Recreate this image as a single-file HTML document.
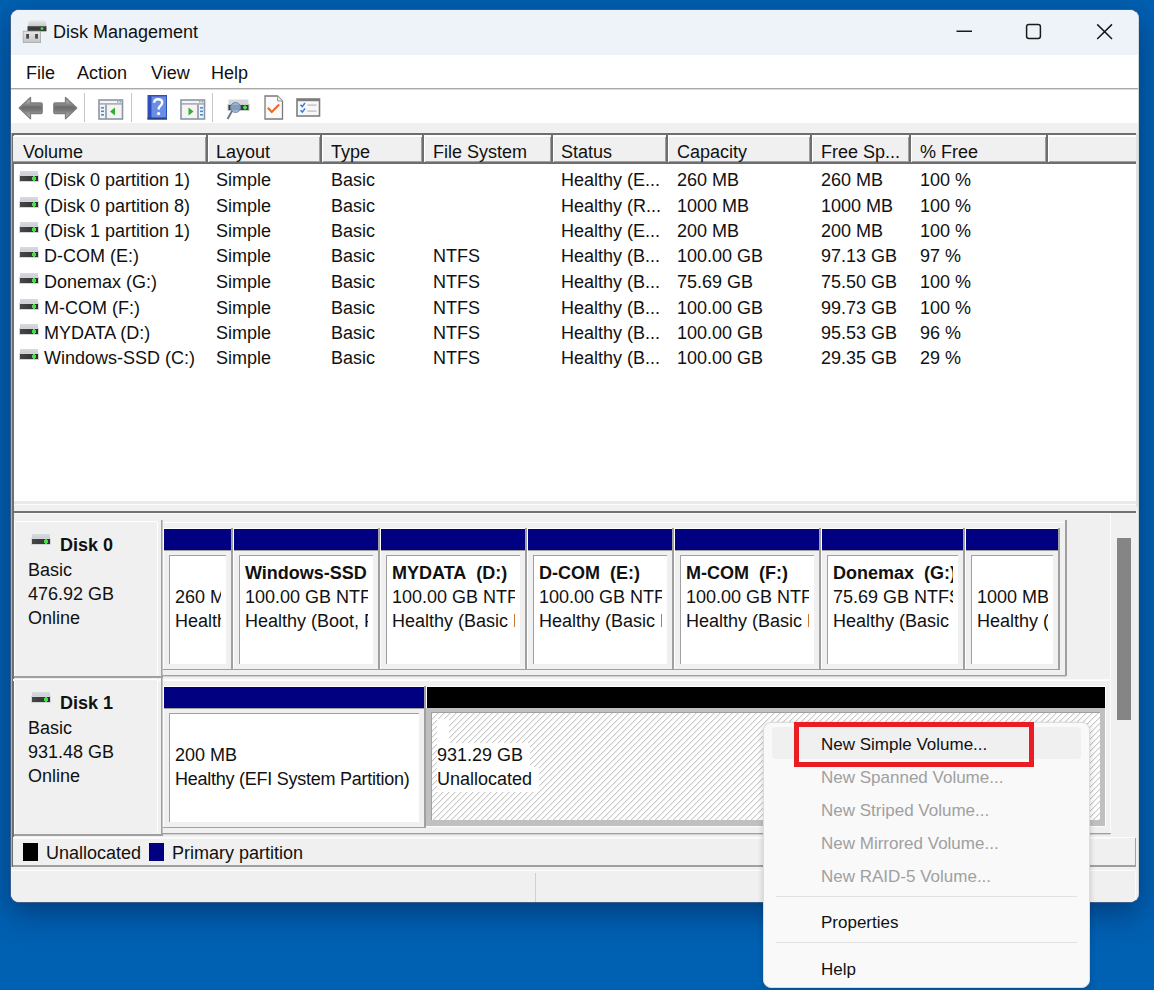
<!DOCTYPE html><html><head><meta charset="utf-8"><style>
*{margin:0;padding:0;box-sizing:border-box}
html,body{width:1154px;height:990px;overflow:hidden}
body{background:#0060b1;font-family:"Liberation Sans",sans-serif;font-size:18px;color:#111;position:relative}
.a{position:absolute}
.t{position:absolute;line-height:20px;white-space:nowrap}
.b{font-weight:bold}
#win{position:absolute;left:10px;top:9px;width:1129px;height:894px;border-radius:9px;border:1px solid #3b5f88;border-right-color:#cfd6de;background:#f0f0f0;box-shadow:0 10px 30px rgba(0,20,60,0.45)}
#lay{position:absolute;left:0;top:0;width:1154px;height:990px;clip-path:inset(10px 16px 88px 11px round 8px)}
.clip{position:absolute;overflow:hidden}
.gr{color:#a3a3a3}
</style></head><body><div id="win"></div><div id="lay">
<div class="a" style="left:11px;top:10px;width:1127px;height:45px;background:#eef3fa"></div>
<div class="a" style="left:11px;top:55px;width:1127px;height:33px;background:#fff"></div>
<div class="a" style="left:11px;top:88px;width:1127px;height:1px;background:#a9a9a9"></div>
<div class="a" style="left:11px;top:89px;width:1127px;height:34px;background:#fff"></div>
<div class="a" style="left:11px;top:89px;width:1127px;height:1px;background:#dcdcdc"></div>
<div class="a" style="left:11px;top:123px;width:1127px;height:10px;background:#f0f0f0"></div>
<div class="a" style="left:11px;top:133px;width:1126px;height:2px;background:#6e6e6e"></div>
<div class="a" style="left:11px;top:133px;width:1px;height:734px;background:#b0b0b0"></div>
<div class="a" style="left:12px;top:133px;width:2px;height:734px;background:#707070"></div>
<div class="a" style="left:14px;top:135px;width:1122px;height:366px;background:#fff"></div>
<div class="a" style="left:1136px;top:133px;width:2px;height:374px;background:#e3e3e3"></div>
<div class="a" style="left:13px;top:136px;width:1123px;height:26px;background:#f0f0f0"></div>
<div class="a" style="left:13px;top:136px;width:1123px;height:1px;background:#fff"></div>
<div class="a" style="left:13px;top:162px;width:1123px;height:2px;background:#6e6e6e"></div>
<div class="a" style="left:13px;top:161px;width:1123px;height:1px;background:#a0a0a0"></div>
<div class="a" style="left:205px;top:137px;width:1px;height:25px;background:#a0a0a0"></div>
<div class="a" style="left:206px;top:135px;width:2px;height:27px;background:#6e6e6e"></div>
<div class="a" style="left:208px;top:137px;width:1px;height:25px;background:#fff"></div>
<div class="a" style="left:319px;top:137px;width:1px;height:25px;background:#a0a0a0"></div>
<div class="a" style="left:320px;top:135px;width:2px;height:27px;background:#6e6e6e"></div>
<div class="a" style="left:322px;top:137px;width:1px;height:25px;background:#fff"></div>
<div class="a" style="left:421px;top:137px;width:1px;height:25px;background:#a0a0a0"></div>
<div class="a" style="left:422px;top:135px;width:2px;height:27px;background:#6e6e6e"></div>
<div class="a" style="left:424px;top:137px;width:1px;height:25px;background:#fff"></div>
<div class="a" style="left:550px;top:137px;width:1px;height:25px;background:#a0a0a0"></div>
<div class="a" style="left:551px;top:135px;width:2px;height:27px;background:#6e6e6e"></div>
<div class="a" style="left:553px;top:137px;width:1px;height:25px;background:#fff"></div>
<div class="a" style="left:665px;top:137px;width:1px;height:25px;background:#a0a0a0"></div>
<div class="a" style="left:666px;top:135px;width:2px;height:27px;background:#6e6e6e"></div>
<div class="a" style="left:668px;top:137px;width:1px;height:25px;background:#fff"></div>
<div class="a" style="left:809px;top:137px;width:1px;height:25px;background:#a0a0a0"></div>
<div class="a" style="left:810px;top:135px;width:2px;height:27px;background:#6e6e6e"></div>
<div class="a" style="left:812px;top:137px;width:1px;height:25px;background:#fff"></div>
<div class="a" style="left:908px;top:137px;width:1px;height:25px;background:#a0a0a0"></div>
<div class="a" style="left:909px;top:135px;width:2px;height:27px;background:#6e6e6e"></div>
<div class="a" style="left:911px;top:137px;width:1px;height:25px;background:#fff"></div>
<div class="a" style="left:1045px;top:137px;width:1px;height:25px;background:#a0a0a0"></div>
<div class="a" style="left:1046px;top:135px;width:2px;height:27px;background:#6e6e6e"></div>
<div class="a" style="left:1048px;top:137px;width:1px;height:25px;background:#fff"></div>
<div class="t" style="left:23px;top:142px;">Volume</div>
<div class="t" style="left:216px;top:142px;">Layout</div>
<div class="t" style="left:331px;top:142px;">Type</div>
<div class="t" style="left:433px;top:142px;">File System</div>
<div class="t" style="left:561px;top:142px;">Status</div>
<div class="t" style="left:677px;top:142px;">Capacity</div>
<div class="t" style="left:821px;top:142px;">Free Sp...</div>
<div class="t" style="left:920px;top:142px;">% Free</div>
<div class="a" style="left:19px;top:171px;width:20px;height:12px"><div class="a" style="left:1px;top:0;width:18px;height:5px;background:linear-gradient(#d8dbe0,#c9ccd1)"></div><div class="a" style="left:0;top:4px;width:20px;height:7px;background:#d2d5da"></div><div class="a" style="left:1px;top:5px;width:18px;height:5px;background:linear-gradient(90deg,#474747,#2e2e2e)"></div><div class="a" style="left:13px;top:6px;width:4px;height:3px;background:#45e045"></div><div class="a" style="left:14px;top:5px;width:2px;height:5px;background:#45e045"></div></div>
<div class="t" style="left:44px;top:170px;">(Disk 0 partition 1)</div>
<div class="t" style="left:216px;top:170px;">Simple</div>
<div class="t" style="left:331px;top:170px;">Basic</div>
<div class="t" style="left:561px;top:170px;">Healthy (E...</div>
<div class="t" style="left:677px;top:170px;">260 MB</div>
<div class="t" style="left:821px;top:170px;">260 MB</div>
<div class="t" style="left:920px;top:170px;">100 %</div>
<div class="a" style="left:19px;top:197px;width:20px;height:12px"><div class="a" style="left:1px;top:0;width:18px;height:5px;background:linear-gradient(#d8dbe0,#c9ccd1)"></div><div class="a" style="left:0;top:4px;width:20px;height:7px;background:#d2d5da"></div><div class="a" style="left:1px;top:5px;width:18px;height:5px;background:linear-gradient(90deg,#474747,#2e2e2e)"></div><div class="a" style="left:13px;top:6px;width:4px;height:3px;background:#45e045"></div><div class="a" style="left:14px;top:5px;width:2px;height:5px;background:#45e045"></div></div>
<div class="t" style="left:44px;top:196px;">(Disk 0 partition 8)</div>
<div class="t" style="left:216px;top:196px;">Simple</div>
<div class="t" style="left:331px;top:196px;">Basic</div>
<div class="t" style="left:561px;top:196px;">Healthy (R...</div>
<div class="t" style="left:677px;top:196px;">1000 MB</div>
<div class="t" style="left:821px;top:196px;">1000 MB</div>
<div class="t" style="left:920px;top:196px;">100 %</div>
<div class="a" style="left:19px;top:222px;width:20px;height:12px"><div class="a" style="left:1px;top:0;width:18px;height:5px;background:linear-gradient(#d8dbe0,#c9ccd1)"></div><div class="a" style="left:0;top:4px;width:20px;height:7px;background:#d2d5da"></div><div class="a" style="left:1px;top:5px;width:18px;height:5px;background:linear-gradient(90deg,#474747,#2e2e2e)"></div><div class="a" style="left:13px;top:6px;width:4px;height:3px;background:#45e045"></div><div class="a" style="left:14px;top:5px;width:2px;height:5px;background:#45e045"></div></div>
<div class="t" style="left:44px;top:221px;">(Disk 1 partition 1)</div>
<div class="t" style="left:216px;top:221px;">Simple</div>
<div class="t" style="left:331px;top:221px;">Basic</div>
<div class="t" style="left:561px;top:221px;">Healthy (E...</div>
<div class="t" style="left:677px;top:221px;">200 MB</div>
<div class="t" style="left:821px;top:221px;">200 MB</div>
<div class="t" style="left:920px;top:221px;">100 %</div>
<div class="a" style="left:19px;top:247px;width:20px;height:12px"><div class="a" style="left:1px;top:0;width:18px;height:5px;background:linear-gradient(#d8dbe0,#c9ccd1)"></div><div class="a" style="left:0;top:4px;width:20px;height:7px;background:#d2d5da"></div><div class="a" style="left:1px;top:5px;width:18px;height:5px;background:linear-gradient(90deg,#474747,#2e2e2e)"></div><div class="a" style="left:13px;top:6px;width:4px;height:3px;background:#45e045"></div><div class="a" style="left:14px;top:5px;width:2px;height:5px;background:#45e045"></div></div>
<div class="t" style="left:44px;top:246px;">D-COM (E:)</div>
<div class="t" style="left:216px;top:246px;">Simple</div>
<div class="t" style="left:331px;top:246px;">Basic</div>
<div class="t" style="left:433px;top:246px;">NTFS</div>
<div class="t" style="left:561px;top:246px;">Healthy (B...</div>
<div class="t" style="left:677px;top:246px;">100.00 GB</div>
<div class="t" style="left:821px;top:246px;">97.13 GB</div>
<div class="t" style="left:920px;top:246px;">97 %</div>
<div class="a" style="left:19px;top:273px;width:20px;height:12px"><div class="a" style="left:1px;top:0;width:18px;height:5px;background:linear-gradient(#d8dbe0,#c9ccd1)"></div><div class="a" style="left:0;top:4px;width:20px;height:7px;background:#d2d5da"></div><div class="a" style="left:1px;top:5px;width:18px;height:5px;background:linear-gradient(90deg,#474747,#2e2e2e)"></div><div class="a" style="left:13px;top:6px;width:4px;height:3px;background:#45e045"></div><div class="a" style="left:14px;top:5px;width:2px;height:5px;background:#45e045"></div></div>
<div class="t" style="left:44px;top:272px;">Donemax (G:)</div>
<div class="t" style="left:216px;top:272px;">Simple</div>
<div class="t" style="left:331px;top:272px;">Basic</div>
<div class="t" style="left:433px;top:272px;">NTFS</div>
<div class="t" style="left:561px;top:272px;">Healthy (B...</div>
<div class="t" style="left:677px;top:272px;">75.69 GB</div>
<div class="t" style="left:821px;top:272px;">75.50 GB</div>
<div class="t" style="left:920px;top:272px;">100 %</div>
<div class="a" style="left:19px;top:299px;width:20px;height:12px"><div class="a" style="left:1px;top:0;width:18px;height:5px;background:linear-gradient(#d8dbe0,#c9ccd1)"></div><div class="a" style="left:0;top:4px;width:20px;height:7px;background:#d2d5da"></div><div class="a" style="left:1px;top:5px;width:18px;height:5px;background:linear-gradient(90deg,#474747,#2e2e2e)"></div><div class="a" style="left:13px;top:6px;width:4px;height:3px;background:#45e045"></div><div class="a" style="left:14px;top:5px;width:2px;height:5px;background:#45e045"></div></div>
<div class="t" style="left:44px;top:298px;">M-COM (F:)</div>
<div class="t" style="left:216px;top:298px;">Simple</div>
<div class="t" style="left:331px;top:298px;">Basic</div>
<div class="t" style="left:433px;top:298px;">NTFS</div>
<div class="t" style="left:561px;top:298px;">Healthy (B...</div>
<div class="t" style="left:677px;top:298px;">100.00 GB</div>
<div class="t" style="left:821px;top:298px;">99.73 GB</div>
<div class="t" style="left:920px;top:298px;">100 %</div>
<div class="a" style="left:19px;top:324px;width:20px;height:12px"><div class="a" style="left:1px;top:0;width:18px;height:5px;background:linear-gradient(#d8dbe0,#c9ccd1)"></div><div class="a" style="left:0;top:4px;width:20px;height:7px;background:#d2d5da"></div><div class="a" style="left:1px;top:5px;width:18px;height:5px;background:linear-gradient(90deg,#474747,#2e2e2e)"></div><div class="a" style="left:13px;top:6px;width:4px;height:3px;background:#45e045"></div><div class="a" style="left:14px;top:5px;width:2px;height:5px;background:#45e045"></div></div>
<div class="t" style="left:44px;top:323px;">MYDATA (D:)</div>
<div class="t" style="left:216px;top:323px;">Simple</div>
<div class="t" style="left:331px;top:323px;">Basic</div>
<div class="t" style="left:433px;top:323px;">NTFS</div>
<div class="t" style="left:561px;top:323px;">Healthy (B...</div>
<div class="t" style="left:677px;top:323px;">100.00 GB</div>
<div class="t" style="left:821px;top:323px;">95.53 GB</div>
<div class="t" style="left:920px;top:323px;">96 %</div>
<div class="a" style="left:19px;top:349px;width:20px;height:12px"><div class="a" style="left:1px;top:0;width:18px;height:5px;background:linear-gradient(#d8dbe0,#c9ccd1)"></div><div class="a" style="left:0;top:4px;width:20px;height:7px;background:#d2d5da"></div><div class="a" style="left:1px;top:5px;width:18px;height:5px;background:linear-gradient(90deg,#474747,#2e2e2e)"></div><div class="a" style="left:13px;top:6px;width:4px;height:3px;background:#45e045"></div><div class="a" style="left:14px;top:5px;width:2px;height:5px;background:#45e045"></div></div>
<div class="t" style="left:44px;top:348px;">Windows-SSD (C:)</div>
<div class="t" style="left:216px;top:348px;">Simple</div>
<div class="t" style="left:331px;top:348px;">Basic</div>
<div class="t" style="left:433px;top:348px;">NTFS</div>
<div class="t" style="left:561px;top:348px;">Healthy (B...</div>
<div class="t" style="left:677px;top:348px;">100.00 GB</div>
<div class="t" style="left:821px;top:348px;">29.35 GB</div>
<div class="t" style="left:920px;top:348px;">29 %</div>
<div class="a" style="left:14px;top:501px;width:1122px;height:3px;background:#e9e9e9"></div>
<div class="a" style="left:14px;top:504px;width:1122px;height:1px;background:#fbfbfb"></div>
<div class="a" style="left:14px;top:505px;width:1122px;height:6px;background:#f0f0f0"></div>
<div class="a" style="left:14px;top:511px;width:1122px;height:2px;background:#727272"></div>
<div class="a" style="left:14px;top:513px;width:1122px;height:1px;background:#fafafa"></div>
<div class="a" style="left:14px;top:514px;width:1123px;height:322px;background:#f0f0f0"></div>
<div class="a" style="left:1110px;top:513px;width:1px;height:320px;background:#fbfbfb"></div>
<div class="a" style="left:1111px;top:513px;width:25px;height:320px;background:#f0f0f0"></div>
<div class="a" style="left:1117px;top:538px;width:14px;height:182px;background:#858585"></div>
<div class="a" style="left:14px;top:521px;width:144px;height:155px;background:#f0f0f0"></div>
<div class="a" style="left:15px;top:521px;width:142px;height:1px;background:#fff"></div>
<div class="a" style="left:14px;top:521px;width:1px;height:155px;background:#fff"></div>
<div class="a" style="left:157px;top:522px;width:1px;height:153px;background:#fff"></div>
<div class="a" style="left:161px;top:520px;width:1px;height:158px;background:#a0a0a0"></div>
<div class="a" style="left:162px;top:520px;width:1px;height:156px;background:#c4c4c4"></div>
<div class="a" style="left:163px;top:522px;width:902px;height:1px;background:#fff"></div>
<div class="a" style="left:1065px;top:520px;width:2px;height:156px;background:#a0a0a0"></div>
<div class="a" style="left:161px;top:675px;width:906px;height:1px;background:#a0a0a0"></div>
<div class="a" style="left:162px;top:676px;width:904px;height:1px;background:#d0d0d0"></div>
<div class="a" style="left:14px;top:676px;width:149px;height:2px;background:#a0a0a0"></div>
<div class="a" style="left:13px;top:679px;width:1098px;height:2px;background:#fafafa"></div>
<div class="a" style="left:31px;top:534px;width:20px;height:12px"><div class="a" style="left:1px;top:0;width:18px;height:5px;background:linear-gradient(#d8dbe0,#c9ccd1)"></div><div class="a" style="left:0;top:4px;width:20px;height:7px;background:#d2d5da"></div><div class="a" style="left:1px;top:5px;width:18px;height:5px;background:linear-gradient(90deg,#474747,#2e2e2e)"></div><div class="a" style="left:13px;top:6px;width:4px;height:3px;background:#45e045"></div><div class="a" style="left:14px;top:5px;width:2px;height:5px;background:#45e045"></div></div>
<div class="t" style="left:60px;top:535px;font-weight:bold">Disk 0</div>
<div class="t" style="left:28px;top:560px;">Basic</div>
<div class="t" style="left:28px;top:584px;">476.92 GB</div>
<div class="t" style="left:28px;top:608px;">Online</div>
<div class="a" style="left:163px;top:528px;width:68px;height:1px;background:#fff"></div>
<div class="a" style="left:163px;top:528px;width:1px;height:141px;background:#fff"></div>
<div class="a" style="left:164px;top:529px;width:67px;height:21px;background:#000080"></div>
<div class="a" style="left:164px;top:550px;width:67px;height:1px;background:#a0a0a0"></div>
<div class="a" style="left:231px;top:528px;width:2px;height:142px;background:#a0a0a0"></div>
<div class="a" style="left:163px;top:669px;width:68px;height:1px;background:#a0a0a0"></div>
<div class="a" style="left:169px;top:555px;width:57px;height:109px;border-top:1px solid #a0a0a0;border-left:1px solid #a0a0a0;background:#fff"></div>
<div class="clip" style="left:170px;top:556px;width:51px;height:108px">
<div class="t" style="left:5px;top:7px;"></div>
<div class="t" style="left:5px;top:31px;">260 MB</div>
<div class="t" style="left:5px;top:55px;">Healthy (EFI System Partition)</div>
</div>
<div class="a" style="left:233px;top:528px;width:145px;height:1px;background:#fff"></div>
<div class="a" style="left:233px;top:528px;width:1px;height:141px;background:#fff"></div>
<div class="a" style="left:234px;top:529px;width:144px;height:21px;background:#000080"></div>
<div class="a" style="left:234px;top:550px;width:144px;height:1px;background:#a0a0a0"></div>
<div class="a" style="left:378px;top:528px;width:2px;height:142px;background:#a0a0a0"></div>
<div class="a" style="left:233px;top:669px;width:145px;height:1px;background:#a0a0a0"></div>
<div class="a" style="left:239px;top:555px;width:134px;height:109px;border-top:1px solid #a0a0a0;border-left:1px solid #a0a0a0;background:#fff"></div>
<div class="clip" style="left:240px;top:556px;width:128px;height:108px">
<div class="t b" style="left:5px;top:7px;">Windows-SSD&nbsp; (C:)</div>
<div class="t" style="left:5px;top:31px;">100.00 GB NTFS</div>
<div class="t" style="left:5px;top:55px;">Healthy (Boot, Page File, Crash Dump, Basic Data Partition)</div>
</div>
<div class="a" style="left:380px;top:528px;width:145px;height:1px;background:#fff"></div>
<div class="a" style="left:380px;top:528px;width:1px;height:141px;background:#fff"></div>
<div class="a" style="left:381px;top:529px;width:144px;height:21px;background:#000080"></div>
<div class="a" style="left:381px;top:550px;width:144px;height:1px;background:#a0a0a0"></div>
<div class="a" style="left:525px;top:528px;width:2px;height:142px;background:#a0a0a0"></div>
<div class="a" style="left:380px;top:669px;width:145px;height:1px;background:#a0a0a0"></div>
<div class="a" style="left:386px;top:555px;width:134px;height:109px;border-top:1px solid #a0a0a0;border-left:1px solid #a0a0a0;background:#fff"></div>
<div class="clip" style="left:387px;top:556px;width:128px;height:108px">
<div class="t b" style="left:5px;top:7px;">MYDATA&nbsp; (D:)</div>
<div class="t" style="left:5px;top:31px;">100.00 GB NTFS</div>
<div class="t" style="left:5px;top:55px;">Healthy (Basic Data Partition)</div>
</div>
<div class="a" style="left:527px;top:528px;width:145px;height:1px;background:#fff"></div>
<div class="a" style="left:527px;top:528px;width:1px;height:141px;background:#fff"></div>
<div class="a" style="left:528px;top:529px;width:144px;height:21px;background:#000080"></div>
<div class="a" style="left:528px;top:550px;width:144px;height:1px;background:#a0a0a0"></div>
<div class="a" style="left:672px;top:528px;width:2px;height:142px;background:#a0a0a0"></div>
<div class="a" style="left:527px;top:669px;width:145px;height:1px;background:#a0a0a0"></div>
<div class="a" style="left:533px;top:555px;width:134px;height:109px;border-top:1px solid #a0a0a0;border-left:1px solid #a0a0a0;background:#fff"></div>
<div class="clip" style="left:534px;top:556px;width:128px;height:108px">
<div class="t b" style="left:5px;top:7px;">D-COM&nbsp; (E:)</div>
<div class="t" style="left:5px;top:31px;">100.00 GB NTFS</div>
<div class="t" style="left:5px;top:55px;">Healthy (Basic Data Partition)</div>
</div>
<div class="a" style="left:674px;top:528px;width:145px;height:1px;background:#fff"></div>
<div class="a" style="left:674px;top:528px;width:1px;height:141px;background:#fff"></div>
<div class="a" style="left:675px;top:529px;width:144px;height:21px;background:#000080"></div>
<div class="a" style="left:675px;top:550px;width:144px;height:1px;background:#a0a0a0"></div>
<div class="a" style="left:819px;top:528px;width:2px;height:142px;background:#a0a0a0"></div>
<div class="a" style="left:674px;top:669px;width:145px;height:1px;background:#a0a0a0"></div>
<div class="a" style="left:680px;top:555px;width:134px;height:109px;border-top:1px solid #a0a0a0;border-left:1px solid #a0a0a0;background:#fff"></div>
<div class="clip" style="left:681px;top:556px;width:128px;height:108px">
<div class="t b" style="left:5px;top:7px;">M-COM&nbsp; (F:)</div>
<div class="t" style="left:5px;top:31px;">100.00 GB NTFS</div>
<div class="t" style="left:5px;top:55px;">Healthy (Basic Data Partition)</div>
</div>
<div class="a" style="left:821px;top:528px;width:142px;height:1px;background:#fff"></div>
<div class="a" style="left:821px;top:528px;width:1px;height:141px;background:#fff"></div>
<div class="a" style="left:822px;top:529px;width:141px;height:21px;background:#000080"></div>
<div class="a" style="left:822px;top:550px;width:141px;height:1px;background:#a0a0a0"></div>
<div class="a" style="left:963px;top:528px;width:2px;height:142px;background:#a0a0a0"></div>
<div class="a" style="left:821px;top:669px;width:142px;height:1px;background:#a0a0a0"></div>
<div class="a" style="left:827px;top:555px;width:131px;height:109px;border-top:1px solid #a0a0a0;border-left:1px solid #a0a0a0;background:#fff"></div>
<div class="clip" style="left:828px;top:556px;width:125px;height:108px">
<div class="t b" style="left:5px;top:7px;">Donemax&nbsp; (G:)</div>
<div class="t" style="left:5px;top:31px;">75.69 GB NTFS</div>
<div class="t" style="left:5px;top:55px;">Healthy (Basic Data Partition)</div>
</div>
<div class="a" style="left:965px;top:528px;width:93px;height:1px;background:#fff"></div>
<div class="a" style="left:965px;top:528px;width:1px;height:141px;background:#fff"></div>
<div class="a" style="left:966px;top:529px;width:92px;height:21px;background:#000080"></div>
<div class="a" style="left:966px;top:550px;width:92px;height:1px;background:#a0a0a0"></div>
<div class="a" style="left:1058px;top:528px;width:2px;height:142px;background:#a0a0a0"></div>
<div class="a" style="left:965px;top:669px;width:93px;height:1px;background:#a0a0a0"></div>
<div class="a" style="left:971px;top:555px;width:82px;height:109px;border-top:1px solid #a0a0a0;border-left:1px solid #a0a0a0;background:#fff"></div>
<div class="clip" style="left:972px;top:556px;width:76px;height:108px">
<div class="t" style="left:5px;top:7px;"></div>
<div class="t" style="left:5px;top:31px;">1000 MB</div>
<div class="t" style="left:5px;top:55px;">Healthy (Recovery Partition)</div>
</div>
<div class="a" style="left:14px;top:679px;width:144px;height:155px;background:#f0f0f0"></div>
<div class="a" style="left:15px;top:679px;width:142px;height:1px;background:#fff"></div>
<div class="a" style="left:14px;top:679px;width:1px;height:155px;background:#fff"></div>
<div class="a" style="left:157px;top:680px;width:1px;height:153px;background:#fff"></div>
<div class="a" style="left:161px;top:678px;width:1px;height:158px;background:#a0a0a0"></div>
<div class="a" style="left:162px;top:678px;width:1px;height:156px;background:#c4c4c4"></div>
<div class="a" style="left:163px;top:680px;width:946px;height:1px;background:#fff"></div>
<div class="a" style="left:161px;top:833px;width:950px;height:1px;background:#a0a0a0"></div>
<div class="a" style="left:162px;top:834px;width:948px;height:1px;background:#d0d0d0"></div>
<div class="a" style="left:14px;top:834px;width:149px;height:2px;background:#a0a0a0"></div>
<div class="a" style="left:13px;top:837px;width:1098px;height:2px;background:#fafafa"></div>
<div class="a" style="left:31px;top:692px;width:20px;height:12px"><div class="a" style="left:1px;top:0;width:18px;height:5px;background:linear-gradient(#d8dbe0,#c9ccd1)"></div><div class="a" style="left:0;top:4px;width:20px;height:7px;background:#d2d5da"></div><div class="a" style="left:1px;top:5px;width:18px;height:5px;background:linear-gradient(90deg,#474747,#2e2e2e)"></div><div class="a" style="left:13px;top:6px;width:4px;height:3px;background:#45e045"></div><div class="a" style="left:14px;top:5px;width:2px;height:5px;background:#45e045"></div></div>
<div class="t" style="left:60px;top:693px;font-weight:bold">Disk 1</div>
<div class="t" style="left:28px;top:718px;">Basic</div>
<div class="t" style="left:28px;top:742px;">931.48 GB</div>
<div class="t" style="left:28px;top:766px;">Online</div>
<div class="a" style="left:163px;top:686px;width:261px;height:1px;background:#fff"></div>
<div class="a" style="left:163px;top:686px;width:1px;height:141px;background:#fff"></div>
<div class="a" style="left:164px;top:687px;width:260px;height:21px;background:#000080"></div>
<div class="a" style="left:164px;top:708px;width:260px;height:1px;background:#a0a0a0"></div>
<div class="a" style="left:424px;top:686px;width:2px;height:142px;background:#a0a0a0"></div>
<div class="a" style="left:163px;top:827px;width:261px;height:1px;background:#a0a0a0"></div>
<div class="a" style="left:169px;top:713px;width:250px;height:109px;border-top:1px solid #a0a0a0;border-left:1px solid #a0a0a0;background:#fff"></div>
<div class="clip" style="left:170px;top:714px;width:244px;height:108px">
<div class="t" style="left:5px;top:7px;"></div>
<div class="t" style="left:5px;top:31px;">200 MB</div>
<div class="t" style="left:5px;top:55px;"><span style="letter-spacing:-0.25px">Healthy (EFI System Partition)</span></div>
</div>
<div class="a" style="left:426px;top:686px;width:679px;height:1px;background:#fff"></div>
<div class="a" style="left:426px;top:686px;width:1px;height:141px;background:#fff"></div>
<div class="a" style="left:427px;top:687px;width:678px;height:21px;background:#000000"></div>
<div class="a" style="left:427px;top:708px;width:678px;height:1px;background:#a0a0a0"></div>
<div class="a" style="left:1105px;top:686px;width:1px;height:141px;background:#fff"></div>
<div class="a" style="left:426px;top:708px;width:679px;height:118px;background:#c0c0c0"></div>
<div class="a" style="left:426px;top:826px;width:680px;height:1px;background:#fafafa"></div>
<div class="a" style="left:431px;top:712px;width:669px;height:108px;border-top:1px solid #a0a0a0;border-left:1px solid #a0a0a0;background:#fff"></div>
<svg class="a" style="left:432px;top:713px" width="668" height="107" shape-rendering="crispEdges"><defs><pattern id="hp" patternUnits="userSpaceOnUse" x="0" y="0" width="6" height="6"><rect x="5" y="0" width="1" height="1" fill="#c9c9c9"/><rect x="4" y="1" width="1" height="1" fill="#c9c9c9"/><rect x="3" y="2" width="1" height="1" fill="#c9c9c9"/><rect x="2" y="3" width="1" height="1" fill="#c9c9c9"/><rect x="1" y="4" width="1" height="1" fill="#c9c9c9"/><rect x="0" y="5" width="1" height="1" fill="#c9c9c9"/><rect x="0" y="0" width="1" height="1" fill="#ebebeb"/><rect x="5" y="1" width="1" height="1" fill="#ebebeb"/><rect x="4" y="2" width="1" height="1" fill="#ebebeb"/><rect x="3" y="3" width="1" height="1" fill="#ebebeb"/><rect x="2" y="4" width="1" height="1" fill="#ebebeb"/><rect x="1" y="5" width="1" height="1" fill="#ebebeb"/></pattern></defs><rect width="100%" height="100%" fill="url(#hp)"/></svg>
<div class="clip" style="left:433px;top:714px;width:662px;height:108px">
<div class="t" style="left:4px;top:5px;line-height:25px;padding:0 7px 0 0;background:#fff;">&nbsp;</div>
<div class="t" style="left:4px;top:29px;line-height:25px;padding:0 7px 0 0;background:#fff;">931.29 GB</div>
<div class="t" style="left:4px;top:53px;line-height:25px;padding:0 7px 0 0;background:#fff;">Unallocated</div>
</div>
<div class="a" style="left:13px;top:839px;width:1123px;height:26px;background:#f0f0f0"></div>
<div class="a" style="left:13px;top:865px;width:1123px;height:2px;background:#a0a0a0"></div>
<div class="a" style="left:1135px;top:838px;width:1px;height:28px;background:#a0a0a0"></div>
<div class="a" style="left:13px;top:837px;width:1122px;height:1px;background:#fcfcfc"></div>
<div class="a" style="left:23px;top:843px;width:15px;height:18px;background:#000"></div>
<div class="t" style="left:46px;top:843px;">Unallocated</div>
<div class="a" style="left:149px;top:843px;width:15px;height:18px;background:#000080"></div>
<div class="t" style="left:172px;top:843px;">Primary partition</div>
<div class="a" style="left:11px;top:869px;width:1127px;height:33px;background:#f0f0f0"></div>
<div class="a" style="left:11px;top:870px;width:1126px;height:1px;background:#fcfcfc"></div>
<div class="a" style="left:1135px;top:873px;width:1px;height:28px;background:#fcfcfc"></div>
<div class="a" style="left:535px;top:873px;width:1px;height:29px;background:#d0d0d0"></div>
<svg class="a" style="left:22px;top:19px" width="26" height="26" viewBox="0 0 26 26"><defs><linearGradient id="dtop" x1="0" y1="0" x2="0" y2="1"><stop offset="0" stop-color="#e8e8e8"/><stop offset="1" stop-color="#c8c8c8"/></linearGradient><linearGradient id="usb" x1="0" y1="0" x2="0" y2="1"><stop offset="0" stop-color="#e6e6e6"/><stop offset="1" stop-color="#c4c4c4"/></linearGradient></defs><path d="M6.5 3 Q7 1.3 9 1.3 L21.5 1.3 Q23.5 1.3 24 3 L24.5 7.2 L6 7.2 Z" fill="url(#dtop)"/><rect x="5.5" y="7.2" width="19" height="4.8" fill="#3a3a3a"/><rect x="5.5" y="12" width="19" height="1" fill="#b8b8b8"/><circle cx="20" cy="9.6" r="1.4" fill="#3be83b"/><rect x="1.2" y="12.2" width="17.4" height="11.4" fill="url(#usb)" stroke="#a8a8a8" stroke-width="0.8"/><rect x="4.2" y="15" width="2.8" height="4.6" fill="#474747"/><rect x="13.1" y="15" width="2.8" height="4.6" fill="#474747"/></svg>
<div class="t" style="left:53px;top:22px;">Disk Management</div>
<svg class="a" style="left:950px;top:18px" width="180" height="28" viewBox="0 0 180 28"><line x1="6.5" y1="13.2" x2="22" y2="13.2" stroke="#1a1a1a" stroke-width="1.4"/><rect x="76.6" y="6.6" width="13.8" height="13.8" rx="2.2" fill="none" stroke="#1a1a1a" stroke-width="1.5"/><path d="M147.2 6.4 L162 21 M162 6.4 L147.2 21" stroke="#1a1a1a" stroke-width="1.5" fill="none"/></svg>
<div class="t" style="left:26px;top:63px;">File</div>
<div class="t" style="left:77px;top:63px;">Action</div>
<div class="t" style="left:151px;top:63px;">View</div>
<div class="t" style="left:211px;top:63px;">Help</div>
<div class="a" style="left:84px;top:93px;width:1px;height:29px;background:#c6c6c6"></div>
<div class="a" style="left:131px;top:93px;width:1px;height:29px;background:#c6c6c6"></div>
<div class="a" style="left:212px;top:93px;width:1px;height:29px;background:#c6c6c6"></div>
<svg class="a" style="left:17px;top:95px" width="28" height="26" viewBox="0 0 28 26"><defs><linearGradient id="ag" x1="0" y1="0" x2="0" y2="1"><stop offset="0" stop-color="#d0d0d0"/><stop offset="0.45" stop-color="#6c6c6c"/><stop offset="0.6" stop-color="#777"/><stop offset="1" stop-color="#c8c8c8"/></linearGradient></defs><path d="M2.2 13 L13.5 2.5 L13.5 8 L24 8 Q25.2 8 25.2 9.2 L25.2 17.3 Q25.2 18.5 24 18.5 L13.5 18.5 L13.5 23.8 Z" fill="url(#ag)" stroke="#7d7d7d" stroke-width="1.3" stroke-linejoin="round"/></svg>
<svg class="a" style="left:51px;top:95px" width="28" height="26" viewBox="0 0 28 26"><path d="M25.8 13 L14.5 2.5 L14.5 8 L4 8 Q2.8 8 2.8 9.2 L2.8 17.3 Q2.8 18.5 4 18.5 L14.5 18.5 L14.5 23.8 Z" fill="url(#ag)" stroke="#7d7d7d" stroke-width="1.3" stroke-linejoin="round"/></svg>
<svg class="a" style="left:98px;top:99px" width="26" height="21" viewBox="0 0 26 21"><rect x="1" y="1" width="23.5" height="19" fill="#f4f4f4" stroke="#8a96a6" stroke-width="1.6"/><rect x="1.5" y="4.2" width="22.5" height="1.4" fill="#9aa3ad"/><rect x="19" y="2" width="1.5" height="1.5" fill="#9aa3ad"/><rect x="21.5" y="2" width="1.5" height="1.5" fill="#9aa3ad"/><rect x="7.2" y="5.5" width="1.6" height="14" fill="#8a96a6"/><rect x="3" y="8" width="3" height="1.6" fill="#4a8ad8"/><rect x="3" y="11.5" width="3" height="1.6" fill="#4a8ad8"/><rect x="3" y="15" width="3" height="1.6" fill="#4a8ad8"/><path d="M12 12.5 L17 8.5 L17 16.5 Z" fill="#30b030"/></svg>
<svg class="a" style="left:180px;top:99px" width="26" height="21" viewBox="0 0 26 21"><rect x="1" y="1" width="23.5" height="19" fill="#f4f4f4" stroke="#8a96a6" stroke-width="1.6"/><rect x="1.5" y="4.2" width="22.5" height="1.4" fill="#9aa3ad"/><rect x="19" y="2" width="1.5" height="1.5" fill="#9aa3ad"/><rect x="21.5" y="2" width="1.5" height="1.5" fill="#9aa3ad"/><rect x="17.2" y="5.5" width="1.6" height="14" fill="#8a96a6"/><rect x="20" y="8" width="3" height="1.6" fill="#4a8ad8"/><rect x="20" y="11.5" width="3" height="1.6" fill="#4a8ad8"/><rect x="20" y="15" width="3" height="1.6" fill="#4a8ad8"/><path d="M13.5 12.5 L8.5 8.5 L8.5 16.5 Z" fill="#30b030"/></svg>
<svg class="a" style="left:147px;top:95px" width="21" height="25" viewBox="0 0 21 25"><rect x="0.5" y="0" width="19.5" height="24.5" fill="#2f4fb8"/><rect x="4.5" y="1.5" width="14.5" height="21.5" fill="#6a8de6"/><rect x="0.5" y="22.5" width="19.5" height="2" fill="#28408a"/><path d="M7.2 7.8 Q7.2 4.2 11.2 4.2 Q15.2 4.2 15.2 7.6 Q15.2 9.8 13 11.2 Q11.6 12.2 11.6 14.6" fill="none" stroke="#fff" stroke-width="2.4"/><circle cx="11.6" cy="18.6" r="1.6" fill="#fff"/></svg>
<svg class="a" style="left:226px;top:99px" width="26" height="22" viewBox="0 0 26 22"><rect x="2.5" y="0.5" width="20" height="5" fill="#d5d7da"/><rect x="1.5" y="5" width="22" height="7" fill="#c8cacd"/><rect x="2.5" y="6" width="20" height="5" fill="#3a3a3a"/><path d="M17 8.5 h4 M19 6.5 v4" stroke="#3ef03e" stroke-width="1.8"/><circle cx="9.5" cy="8.5" r="5" fill="#8fb0d0" fill-opacity="0.85" stroke="#6f8aa8" stroke-width="1"/><line x1="6" y1="12" x2="1.5" y2="20" stroke="#6a7a8a" stroke-width="2"/></svg>
<svg class="a" style="left:264px;top:95px" width="20" height="25" viewBox="0 0 20 25"><path d="M1 1 L13.5 1 L18.5 6 L18.5 24 L1 24 Z" fill="#fafafa" stroke="#7a7a7a" stroke-width="1.3"/><path d="M13.5 1 L13.5 6 L18.5 6" fill="#e4e4e4" stroke="#9a9a9a" stroke-width="1"/><path d="M3.8 12.8 L7.8 17 L15.2 9.5" fill="none" stroke="#f06a28" stroke-width="2.2"/></svg>
<svg class="a" style="left:296px;top:98px" width="25" height="20" viewBox="0 0 25 20"><rect x="1" y="1" width="22.5" height="17" fill="#f8f8f8" stroke="#7d7d7d" stroke-width="1.6"/><rect x="1" y="1" width="22.5" height="2.2" fill="#7d7d7d"/><path d="M4.5 6.8 L6.3 8.6 L9 5" fill="none" stroke="#3a7ae0" stroke-width="1.5"/><path d="M4.5 12.3 L6.3 14.1 L9 10.5" fill="none" stroke="#3a7ae0" stroke-width="1.5"/><rect x="11.5" y="6.5" width="9" height="1.2" fill="#b8b8b8"/><rect x="11.5" y="12.5" width="9" height="1.2" fill="#b8b8b8"/></svg>
</div>
<div class="a" style="left:763px;top:722px;width:327px;height:266px;background:#f9f9f9;border:1px solid #dcdcdc;border-radius:8px;box-shadow:0 2px 6px rgba(0,0,0,0.18)"></div>
<div class="a" style="left:772px;top:727px;width:309px;height:32px;background:#f0f0f0;border-radius:4px"></div>
<div class="t" style="left:821px;top:735px;font-size:17px">New Simple Volume...</div>
<div class="t" style="left:821px;top:768px;color:#a0a0a0;font-size:17px">New Spanned Volume...</div>
<div class="t" style="left:821px;top:801px;color:#a0a0a0;font-size:17px">New Striped Volume...</div>
<div class="t" style="left:821px;top:834px;color:#a0a0a0;font-size:17px">New Mirrored Volume...</div>
<div class="t" style="left:821px;top:867px;color:#a0a0a0;font-size:17px">New RAID-5 Volume...</div>
<div class="a" style="left:776px;top:896px;width:301px;height:1px;background:#e1e1e1"></div>
<div class="t" style="left:821px;top:913px;font-size:17px">Properties</div>
<div class="a" style="left:776px;top:942px;width:301px;height:1px;background:#e1e1e1"></div>
<div class="t" style="left:821px;top:960px;font-size:17px">Help</div>
<div class="a" style="left:794px;top:722px;width:240px;height:45px;border:5px solid #ea1c24"></div></body></html>
